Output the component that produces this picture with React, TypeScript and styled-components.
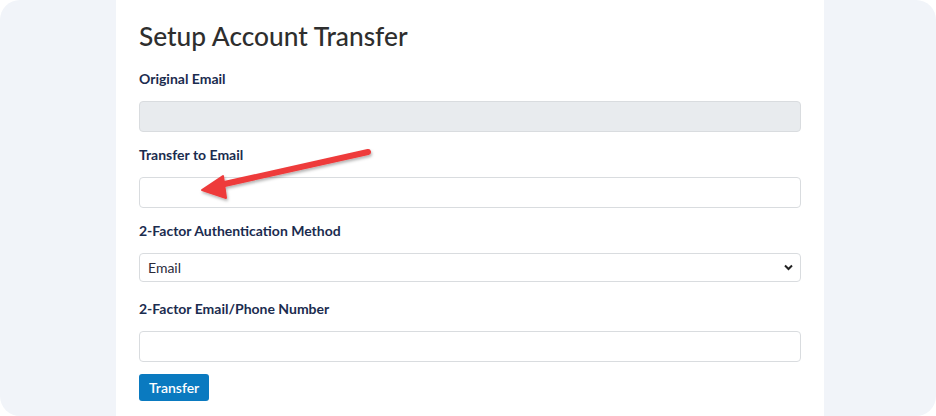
import React from 'react'
import styled, { createGlobalStyle } from 'styled-components'

const GlobalStyle = createGlobalStyle`
  html, body {
    margin: 0;
    padding: 0;
    background: #ffffff;
  }
  body {
    font-family: Lato, "Noto Sans", Arial, sans-serif;
  }
`

const Frame = styled.div`
  position: relative;
  width: 936px;
  height: 416px;
  background: #f1f4f9;
  border-radius: 20px;
  overflow: hidden;
  display: flex;
`

const Panel = styled.div`
  margin-left: 116px;
  width: 708px;
  box-sizing: border-box;
  background: #ffffff;
  padding: 20px 23px 0 23px;
  display: flex;
  flex-direction: column;
`

const Title = styled.h1`
  margin: 0 0 17px 0;
  font-size: 26.3px;
  line-height: 32px;
  font-weight: 500;
  color: #2e2e2e;
`

type GroupProps = { gap?: number }
const Group = styled.div<GroupProps>`
  display: flex;
  flex-direction: column;
  margin-bottom: ${({ gap }) => gap ?? 13}px;
`

const Label = styled.label`
  font-size: 14px;
  line-height: 20px;
  font-weight: 700;
  color: #1b2c4f;
  margin-bottom: 12px;
`

type InputProps = { disabled?: boolean }
const Input = styled.input<InputProps>`
  box-sizing: border-box;
  width: 662px;
  height: 31px;
  border: 1px solid #d9dcdf;
  border-radius: 4px;
  background: ${({ disabled }) => (disabled ? '#e8ebee' : '#ffffff')};
  font-family: inherit;
  font-size: 14px;
  padding: 0 9px;
  outline: none;
`

const SelectWrap = styled.div`
  position: relative;
  width: 662px;
`

const Select = styled.select`
  appearance: none;
  -webkit-appearance: none;
  box-sizing: border-box;
  width: 662px;
  height: 29px;
  border: 1px solid #d9dcdf;
  border-radius: 4px;
  background: #ffffff;
  font-family: inherit;
  font-size: 14px;
  color: #2b2b3a;
  padding: 0 8px;
  outline: none;
`

const Chevron = styled.svg`
  position: absolute;
  right: 8px;
  top: 11px;
  pointer-events: none;
`

const Button = styled.button`
  align-self: flex-start;
  height: 27px;
  padding: 0 10px;
  border: none;
  border-radius: 3px;
  background: #0a7ac0;
  color: #ffffff;
  font-family: inherit;
  font-size: 14px;
  font-weight: 600;
  cursor: pointer;
`

const Arrow = styled.svg`
  position: absolute;
  left: 190px;
  top: 140px;
  overflow: visible;
`

function App () {
  return (
    <>
      <GlobalStyle />
      <Frame>
        <Panel>
          <Title>Setup Account Transfer</Title>
          <Group>
            <Label>Original Email</Label>
            <Input disabled />
          </Group>
          <Group>
            <Label>Transfer to Email</Label>
            <Input />
          </Group>
          <Group gap={17}>
            <Label>2-Factor Authentication Method</Label>
            <SelectWrap>
              <Select defaultValue="email">
                <option value="email">Email</option>
                <option value="sms">SMS</option>
              </Select>
              <Chevron width="9" height="7" viewBox="0 0 9 7">
                <path d="M1 1.5 L4.5 5 L8 1.5" fill="none" stroke="#222" strokeWidth="2" />
              </Chevron>
            </SelectWrap>
          </Group>
          <Group gap={12}>
            <Label>2-Factor Email/Phone Number</Label>
            <Input />
          </Group>
          <Button>Transfer</Button>
        </Panel>
        <Arrow width="190" height="60" viewBox="0 0 190 60">
          <defs>
            <filter id="sh" x="-20%" y="-50%" width="140%" height="200%">
              <feDropShadow dx="1" dy="2" stdDeviation="1.5" floodColor="#000" floodOpacity="0.3" />
            </filter>
          </defs>
          <g filter="url(#sh)">
            <line x1="178" y1="12" x2="30" y2="45" stroke="#ee3b3b" strokeWidth="6" strokeLinecap="round" />
            <polygon points="12,50 33,36 36,58" fill="#ee3b3b" strokeLinejoin="round" stroke="#ee3b3b" strokeWidth="2" />
          </g>
        </Arrow>
      </Frame>
    </>
  )
}

export default App
